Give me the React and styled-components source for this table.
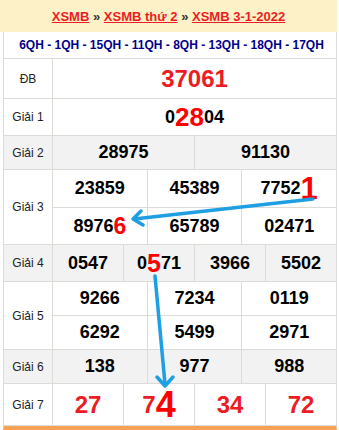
import React from "react";
import styled, { createGlobalStyle } from "styled-components";

const GlobalStyle = createGlobalStyle`
  html, body {
    margin: 0;
    padding: 0;
    background: #fff;
  }
  body {
    font-family: "Liberation Sans", Arial, sans-serif;
  }
  * {
    box-sizing: border-box;
  }
`;

const LINE = "#dedad5";

const Page = styled.div`
  position: relative;
  width: 339px;
  height: 430px;
  overflow: hidden;
`;

const Header = styled.div`
  width: 337px;
  height: 32px;
  background: #fdf2c7;
  display: flex;
  align-items: center;
  justify-content: center;
  font-size: 13px;
  font-weight: bold;
  color: #333;
  white-space: pre;
`;

const Crumb = styled.a`
  color: #ed1c24;
  text-decoration: underline;
`;

const Board = styled.div`
  margin-left: 3px;
  width: 334px;
  border-left: 1px solid ${LINE};
  border-right: 1px solid ${LINE};
  border-bottom: 4px solid #f4a253;
`;

const QhRow = styled.div`
  height: 27px;
  border-bottom: 1px solid ${LINE};
  display: flex;
  align-items: center;
  justify-content: center;
  padding-left: 3px;
  font-size: 12px;
  font-weight: bold;
  color: #00008b;
`;

const Prize = styled.div`
  display: flex;
  background: ${({ $shade }) => ($shade ? "#f2f2f2" : "#fff")};
  border-bottom: 1px solid ${LINE};
`;

const Label = styled.div`
  width: 49px;
  flex: none;
  border-right: 1px solid ${LINE};
  display: flex;
  align-items: center;
  justify-content: center;
  font-size: 12px;
  color: #222;
`;

const Lines = styled.div`
  flex: 1;
  display: flex;
  flex-direction: column;
`;

const Line = styled.div`
  display: flex;
  height: ${({ $h }) => $h}px;
  &:not(:last-child) {
    border-bottom: 1px solid ${LINE};
  }
`;

const Cell = styled.div`
  flex: 1;
  display: flex;
  align-items: center;
  justify-content: center;
  font-size: ${({ $size }) => $size || 18}px;
  font-weight: bold;
  color: ${({ $red }) => ($red ? "#ed1c24" : "#000")};
  &:not(:last-child) {
    border-right: 1px solid ${LINE};
  }
`;

const Hot = styled.span`
  color: #ff0000;
  font-size: ${({ $size }) => $size}px;
  line-height: 1;
`;

const Arrows = styled.svg`
  position: absolute;
  top: 0;
  left: 0;
  pointer-events: none;
`;

const renderNum = (n) =>
  typeof n === "string" ? n : n.map((p, i) => (typeof p === "string" ? p : <Hot key={i} $size={p.size}>{p.t}</Hot>));

const prizes = [
  { label: "ĐB", lines: [{ h: 39, cells: ["37061"] }], red: true, size: 24 },
  { label: "Giải 1", lines: [{ h: 36, cells: [["0", { t: "28", size: 26 }, "04"]] }] },
  { label: "Giải 2", shade: true, lines: [{ h: 33, cells: ["28975", "91130"] }] },
  {
    label: "Giải 3",
    lines: [
      { h: 38, cells: ["23859", "45389", ["7752", { t: "1", size: 31 }]] },
      { h: 36, cells: [["8976", { t: "6", size: 23 }], "65789", "02471"] },
    ],
  },
  { label: "Giải 4", shade: true, lines: [{ h: 36, cells: ["0547", ["0", { t: "5", size: 25 }, "71"], "3966", "5502"] }] },
  {
    label: "Giải 5",
    lines: [
      { h: 34, cells: ["9266", "7234", "0119"] },
      { h: 33, cells: ["6292", "5499", "2971"] },
    ],
  },
  { label: "Giải 6", shade: true, lines: [{ h: 33, cells: ["138", "977", "988"] }] },
  { label: "Giải 7", lines: [{ h: 41, cells: ["27", ["7", { t: "4", size: 36 }], "34", "72"] }], red: true, size: 24 },
];

const App = () => (
  <Page>
    <GlobalStyle />
    <Header>
      <Crumb>XSMB</Crumb>
      {" » "}
      <Crumb>XSMB thứ 2</Crumb>
      {" » "}
      <Crumb>XSMB 3-1-2022</Crumb>
    </Header>
    <Board>
      <QhRow>6QH - 1QH - 15QH - 11QH - 8QH - 13QH - 18QH - 17QH</QhRow>
      {prizes.map((p) => (
        <Prize key={p.label} $shade={p.shade}>
          <Label>{p.label}</Label>
          <Lines>
            {p.lines.map((l, i) => (
              <Line key={i} $h={l.h}>
                {l.cells.map((c, j) => (
                  <Cell key={j} $red={p.red} $size={p.size}>
                    {renderNum(c)}
                  </Cell>
                ))}
              </Line>
            ))}
          </Lines>
        </Prize>
      ))}
    </Board>
    <Arrows width="339" height="430" viewBox="0 0 339 430">
      <g stroke="#1e9fe3" strokeWidth="3.5" strokeLinecap="round" fill="none">
        <line x1="313" y1="199" x2="134" y2="219" />
        <polyline points="141,211 133,219 143,225" strokeLinejoin="round" />
        <line x1="155" y1="276" x2="165" y2="384" />
        <polyline points="157,377 165,386 173,377" strokeLinejoin="round" />
      </g>
    </Arrows>
  </Page>
);

export default App;
